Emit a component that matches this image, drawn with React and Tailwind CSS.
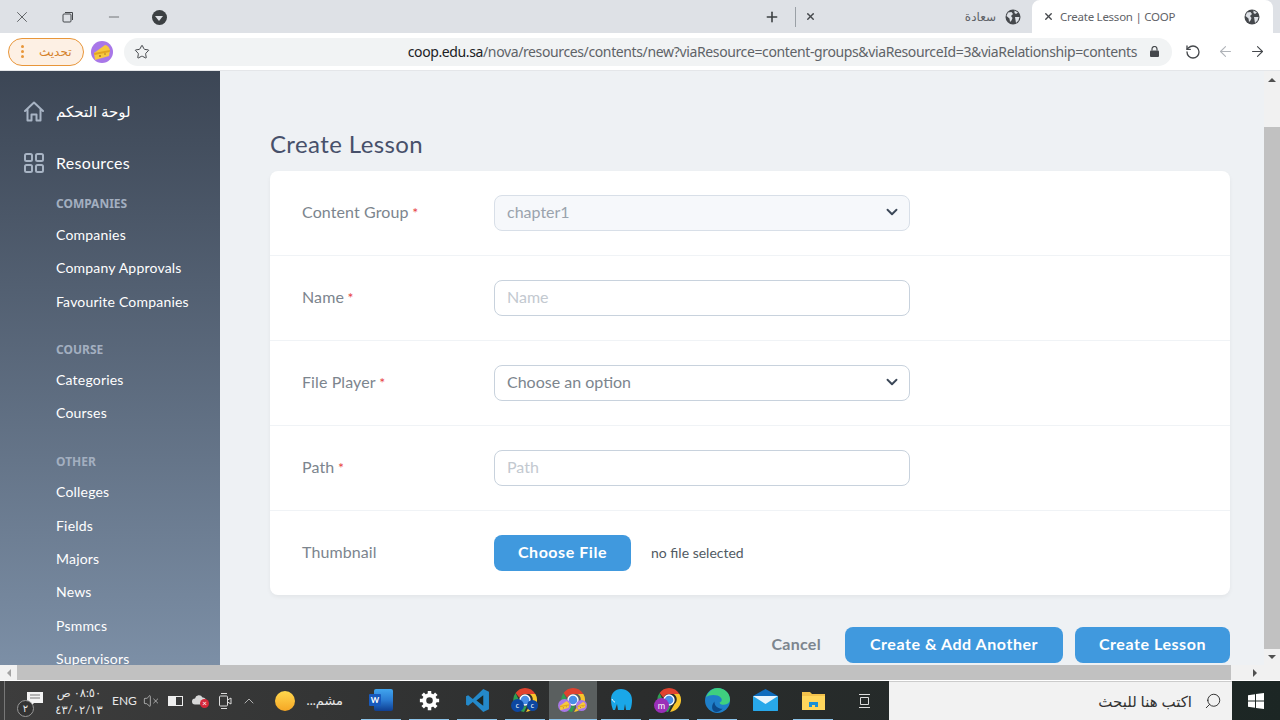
import React from "react";
import { ChevronDown, Star, RotateCw, ArrowLeft, ArrowRight, Plus, X, Minus, Search, VolumeX, ChevronUp } from "lucide-react";

const FONT = "font-['Lato','Noto_Sans','DejaVu_Sans',sans-serif]";

const Globe = ({ className = "" }) => (
  <svg viewBox="0 0 16 16" className={className}>
    <circle cx="8" cy="8" r="7.5" fill="#45484c" />
    <path d="M3 3.5 6.5 3 8 5 6 7 7.5 9 6.5 11.5 5 13 4.5 9.5 1.5 7Z M9.5 1.5 13 3.5 11 5 9.5 4Z M10 8 14.5 8 13.5 11.5 11 14 10.5 11Z" fill="#dee1e6" />
  </svg>
);

const Cheese = ({ s = 22 }) => (
  <svg viewBox="0 0 22 22" width={s} height={s}>
    <circle cx="11" cy="11" r="11" fill="#a877e8" />
    <path d="M3 12 14 4c2.500 .5 4 2 5 5l-1 6-14 4Z" fill="#f7c93e" />
    <path d="M3 12 19 9l-.4 2L3.500 14Z" fill="#e2a520" />
    <circle cx="9" cy="15" r="1" fill="#a8741a" />
    <circle cx="14" cy="13" r=".8" fill="#a8741a" />
  </svg>
);

const ChromeLogo = ({ children }) => (
  <div className="relative w-[24px] h-[24px]">
    <svg viewBox="0 0 24 24" width="24" height="24">
      <path d="M12 0a12 12 0 0 1 10.4 6H12a6 6 0 0 0-5.6 3.8L2.6 5A12 12 0 0 1 12 0Z" fill="#e0432f" />
      <path d="M22.4 6A12 12 0 0 1 13 24l4.5-8a6 6 0 0 0-1-10Z" fill="#f8c52c" />
      <path d="M2.6 5 7.500 15.500a6 6 0 0 0 6.500 2.500L11 24A12 12 0 0 1 2.600 5Z" fill="#2f9e52" />
      <circle cx="12" cy="12" r="5" fill="#4a8fe8" stroke="#fff" strokeWidth="1.400" />
    </svg>
    {children}
  </div>
);

const Badge = ({ bg, children, className = "" }) => (
  <span className={`absolute flex items-center justify-center rounded-full text-white text-[7px] leading-none ${bg} ${className}`}>{children}</span>
);

const NavLink = ({ children }) => (
  <div className="h-[33.33px] flex items-center pl-[56px] text-[14px] tracking-[0.2px] text-white whitespace-nowrap">{children}</div>
);

const NavHead = ({ children, className = "" }) => (
  <div className={`h-[16px] flex items-center pl-[56px] text-[12px] font-bold font-['Noto_Sans'] text-[#a3afc0] ${className}`}>{children}</div>
);

const Row = ({ label, req, children, last }) => (
  <div className={`flex items-center px-[32px] ${last ? "h-[84px]" : "h-[85px] border-b border-[#f0f3f6]"}`}>
    <div className="w-[192px] pb-[2px] text-[16px] tracking-[0.1px] text-[#7c858e]">
      {label}
      {req && <span className="text-[#e74444] text-[14px]"> *</span>}
    </div>
    {children}
  </div>
);

const TaskItem = ({ children, active, run = true }) => (
  <div className={`w-[48px] h-full flex flex-col items-center ${active ? "bg-[#5a5f5f]" : ""}`}>
    <div className="flex-1 flex items-center justify-center">{children}</div>
    <div className={`h-[2px] w-full ${run ? (active ? "bg-[#8cc4ea]" : "px-[4px]") : ""}`}>
      {run && !active && <div className="h-full bg-[#8cc4ea]" />}
    </div>
  </div>
);

const btn = "h-[36px] pb-[2px] rounded-[8px] bg-[#4099de] flex items-center justify-center text-white font-bold text-[16px] tracking-[0.55px]";

export default function App() {
  return (
    <div className={`w-[1280px] h-[720px] overflow-hidden flex flex-col bg-white ${FONT}`}>
      {/* tab strip */}
      <div className="h-[33px] shrink-0 bg-[#dee1e6] flex items-center">
        <div className="w-[44px] flex justify-center"><X size={18} strokeWidth={1} className="text-[#3a3c3f]" /></div>
        <div className="w-[48px] flex justify-center">
          <svg width="12" height="12" viewBox="0 0 12 12" fill="none" stroke="#45484c" strokeWidth="1"><path d="M3 1.500h7.500V9" /><rect x="1" y="3" width="8" height="8" rx="1" fill="#dee1e6" /></svg>
        </div>
        <div className="w-[44px] flex justify-center"><Minus size={16} strokeWidth={1} className="text-[#3a3c3f]" /></div>
        <div className="w-[46px] flex justify-center mt-[1px]">
          <span className="w-[15px] h-[15px] rounded-full bg-[#3c4043] flex items-center justify-center">
            <span className="w-0 h-0 border-x-[4px] border-x-transparent border-t-[5px] border-t-[#dee1e6] mt-[2px]" />
          </span>
        </div>
        <div className="flex-1" />
        <Plus size={16} strokeWidth={2.400} className="text-[#3c4043] mr-[15px]" />
        <div className="w-px h-[20px] bg-[#9aa0a6] mr-[9px]" />
        <X size={11} strokeWidth={3} className="text-[#45484c]" />
        <div className="w-[149px]" />
        <span className="text-[12px] text-[#5f6368]" dir="rtl">سعادة</span>
        <Globe className="w-[16px] h-[16px] ml-[9px]" />
        <div className="w-[11px]" />
        <div className="w-[241px] h-[33px] self-end bg-white rounded-t-[8px] flex items-center pl-[11px]">
          <X size={11} strokeWidth={3} className="text-[#45484c]" />
          <span className="ml-[6px] text-[11.5px] tracking-[-0.25px] text-[#5f6368] whitespace-nowrap font-['Noto_Sans']">Create Lesson | COOP</span>
          <div className="flex-1" />
          <Globe className="w-[16px] h-[16px] mr-[13px]" />
        </div>
        <div className="w-[7px]" />
      </div>

      {/* toolbar */}
      <div className="h-[37px] shrink-0 bg-white flex items-center pl-[8px] border-b border-[#e4e6e9] box-content">
        <div className="w-[76px] h-[28px] rounded-full border border-[#e8963a] bg-[#fdf0e4] flex items-center pl-[12px]">
          <span className="flex flex-col gap-[2px]">
            <i className="w-[3px] h-[3px] rounded-full bg-[#e8963a]" />
            <i className="w-[3px] h-[3px] rounded-full bg-[#e8963a]" />
            <i className="w-[3px] h-[3px] rounded-full bg-[#e8963a]" />
          </span>
          <span className="ml-[15px] text-[12px] text-[#d5812a] leading-none" dir="rtl">تحديث</span>
        </div>
        <div className="ml-[7px]"><Cheese /></div>
        <div className="ml-[11px] w-[1048px] h-[28px] rounded-full bg-[#f1f3f4] flex items-center pl-[10px]">
          <Star size={16} strokeWidth={1.500} className="text-[#45484c]" />
          <div className="flex-1 text-right text-[14px] whitespace-nowrap font-['Noto_Sans'] tracking-[-0.38px] text-[#5f6368]">
            <span className="text-[#202124]">coop.edu.sa</span>/nova/resources/contents/new?viaResource=content-groups&amp;viaResourceId=3&amp;viaRelationship=contents
          </div>
          <svg width="9" height="11" viewBox="0 0 9 11" className="ml-[13px] mr-[13px]"><path d="M2 4.500V3a2.500 2.500 0 0 1 5 0v1.500" fill="none" stroke="#45484c" strokeWidth="1.200" /><rect y="4.500" width="9" height="6.500" rx="1" fill="#45484c" /></svg>
        </div>
        <RotateCw size={16} strokeWidth={2} className="text-[#45484c] ml-[13px] -scale-x-100" />
        <ArrowLeft size={17} strokeWidth={1.500} className="text-[#b0b4b9] ml-[16px]" />
        <ArrowRight size={17} strokeWidth={1.500} className="text-[#45484c] ml-[15px]" />
      </div>

      {/* page */}
      <div className="h-[594px] shrink-0 flex overflow-hidden">
        <aside className="w-[220px] shrink-0 overflow-hidden bg-gradient-to-b from-[#3c4655] to-[#7c8fa6]">
          <div className="flex items-center h-[24px] mt-[28px] pl-[24px] text-white text-[15px]">
            <svg width="20" height="21" viewBox="0 0 20 21" fill="none" stroke="#a8b4c4" strokeWidth="2" strokeLinejoin="round" strokeLinecap="round"><path d="M1 10 10 1.500 19 10M3.500 8v11.500h4V13.500h5v6h4V8" /></svg>
            <span className="ml-[12px]" dir="rtl">لوحة التحكم</span>
          </div>
          <div className="flex items-center h-[24px] mt-[28px] pl-[24px] text-white text-[16px] tracking-[0.3px]">
            <svg width="20" height="20" viewBox="0 0 20 20" fill="none" stroke="#a8b4c4" strokeWidth="2"><rect x="1" y="1" width="7" height="7" rx="1.500" /><rect x="12" y="1" width="7" height="7" rx="1.500" /><rect x="1" y="12" width="7" height="7" rx="1.500" /><rect x="12" y="12" width="7" height="7" rx="1.500" /></svg>
            <span className="ml-[12px]">Resources</span>
          </div>
          <NavHead className="mt-[21px] mb-[6px]">COMPANIES</NavHead>
          <NavLink>Companies</NavLink>
          <NavLink>Company Approvals</NavLink>
          <NavLink>Favourite Companies</NavLink>
          <NavHead className="mt-[24px] mb-[5px]">COURSE</NavHead>
          <NavLink>Categories</NavLink>
          <NavLink>Courses</NavLink>
          <NavHead className="mt-[24px] mb-[5.500px]">OTHER</NavHead>
          <NavLink>Colleges</NavLink>
          <NavLink>Fields</NavLink>
          <NavLink>Majors</NavLink>
          <NavLink>News</NavLink>
          <NavLink>Psmmcs</NavLink>
          <NavLink>Supervisors</NavLink>
        </aside>

        <main className="flex-1 bg-[#eef1f4] pl-[50px] pr-[34px] pt-[57px] overflow-hidden">
          <h1 className="h-[32px] mb-[11px] text-[24px] leading-[32px] tracking-[0.4px] text-[#47506a]">Create Lesson</h1>
          <div className="bg-white rounded-[8px] shadow-[0_2px_4px_rgba(0,0,0,0.05)]">
            <Row label="Content Group" req>
              <div className="w-[416px] h-[36px] pb-[2px] rounded-[8px] border border-[#d8dfe8] bg-[#f6f8fb] flex items-center justify-between pl-[12px] pr-[8px] text-[16px] text-[#9aa3ad]">
                chapter1 <ChevronDown size={18} strokeWidth={2.500} className="text-[#3c4858]" />
              </div>
            </Row>
            <Row label="Name" req>
              <div className="w-[416px] h-[36px] pb-[2px] rounded-[8px] border border-[#c8d2dd] flex items-center pl-[12px] text-[16px] text-[#c3c9d0]">Name</div>
            </Row>
            <Row label="File Player" req>
              <div className="w-[416px] h-[36px] pb-[2px] rounded-[8px] border border-[#c8d2dd] flex items-center justify-between pl-[12px] pr-[8px] text-[16px] text-[#7c858e]">
                Choose an option <ChevronDown size={18} strokeWidth={2.500} className="text-[#3c4858]" />
              </div>
            </Row>
            <Row label="Path" req>
              <div className="w-[416px] h-[36px] pb-[2px] rounded-[8px] border border-[#c8d2dd] flex items-center pl-[12px] text-[16px] text-[#c3c9d0]">Path</div>
            </Row>
            <Row label="Thumbnail" last>
              <div className={`w-[137px] ${btn}`}>Choose File</div>
              <span className="ml-[20px] pb-[2px] text-[14px] text-[#515a63]">no file selected</span>
            </Row>
          </div>
          <div className="flex items-center justify-end mt-[32px]">
            <span className="text-[16px] pb-[2px] font-bold text-[#7c858e] tracking-[0.3px] mr-[24px]">Cancel</span>
            <div className={`w-[218px] mr-[12px] ${btn}`}>Create &amp; Add Another</div>
            <div className={`w-[155px] ${btn}`}>Create Lesson</div>
          </div>
        </main>

        <div className="w-[16px] shrink-0 bg-[#f1f1f1] flex flex-col items-center">
          <div className="h-[16px] shrink-0 flex items-center justify-center mt-[1px]">
            <span className="w-0 h-0 border-x-[4px] border-x-transparent border-b-[4px] border-b-[#505050]" />
          </div>
          <div className="w-full h-[39px] shrink-0" />
          <div className="w-full flex-1 bg-[#c1c1c1]" />
          <div className="h-[16px] shrink-0 flex items-center justify-center">
            <span className="w-0 h-0 border-x-[4px] border-x-transparent border-t-[4px] border-t-[#505050]" />
          </div>
        </div>
      </div>

      {/* horizontal scrollbar */}
      <div className="h-[15px] shrink-0 bg-[#f1f1f1] flex items-center">
        <div className="w-[17px] flex justify-center"><span className="w-0 h-0 border-y-[4px] border-y-transparent border-r-[4px] border-r-[#a3a3a3]" /></div>
        <div className="w-[1214px] h-full bg-[#c1c1c1]" />
        <div className="w-[22px]" />
        <span className="w-0 h-0 border-y-[4px] border-y-transparent border-l-[4px] border-l-[#505050]" />
      </div>

      {/* taskbar */}
      <div className="h-[41px] shrink-0 border-t border-white bg-gradient-to-r from-[#3d3d3d] via-[#2b2d2d] to-[#1c2624] flex items-center text-[#e8e8e8]">
        <div className="w-[5px] h-full border-r border-[#777]" />
        <div className="w-[50px] h-full relative flex items-center justify-center shrink-0">
          <svg width="18" height="17" viewBox="0 0 18 17" className="ml-[9px] -mt-[3px]"><path d="M1 1h16v11H8l-3 3v-3H1Z" fill="#f4f4f4" /><path d="M4 4h10M4 7h10" stroke="#777" /></svg>
          <span className="absolute left-[12px] top-[19px] w-[17px] h-[17px] rounded-full border border-[#999] bg-[#333] text-[10px] leading-[15px] text-center">٢</span>
        </div>
        <div className="w-[50px] shrink-0 flex flex-col items-center text-[11.5px] leading-[17px] -ml-[1px]">
          <span dir="rtl">٠٨:٥٠ ص</span>
          <span>٤٣/٠٢/١٣</span>
        </div>
        <span className="ml-[8px] w-[24px] text-[12px]">ENG</span>
        <VolumeX size={16} strokeWidth={1} className="ml-[7px] text-[#e0e0e0]" />
        <svg width="16" height="10" viewBox="0 0 16 10" className="ml-[9px]"><rect x=".5" y=".5" width="14" height="9" fill="none" stroke="#eee" /><rect x="1" y="1" width="7" height="8" fill="#eee" /></svg>
        <div className="relative w-[16px] h-[14px] ml-[8px]">
          <svg width="14" height="10" viewBox="0 0 14 10" className="absolute top-[1px]"><path d="M3 9.500a3 3 0 0 1 0-6 4 4 0 0 1 7.500-1 3.500 3.500 0 0 1 0 7Z" fill="#d8d8d8" /></svg>
          <span className="absolute left-[8px] top-[5px] w-[9px] h-[9px] rounded-full bg-[#d6283a] text-white text-[8px] leading-[9px] text-center">×</span>
        </div>
        <svg width="14" height="18" viewBox="0 0 14 18" fill="none" stroke="#ddd" className="ml-[10px]"><rect x="1.500" y="4" width="8" height="10" rx="1" /><path d="M9.500 8 13 6v6l-3.500-2M3 1.500h6M3 16.500h6" /></svg>
        <ChevronUp size={16} strokeWidth={1} className="ml-[9px] text-[#eee]" />
        <div className="ml-[18px] w-[20px] h-[20px] rounded-full bg-gradient-to-b from-[#ffd84d] to-[#f5a623]" />
        <span className="ml-[8px] text-[13px] w-[40px]" dir="rtl">مشم...</span>

        <div className="flex h-full ml-[14px]">
          <TaskItem>
            <div className="relative w-[24px] h-[22px]">
              <div className="absolute right-0 top-0 w-[19px] h-[22px] rounded-[2px] bg-gradient-to-b from-[#41a5ee] via-[#2b7cd3] to-[#103f91]" />
              <div className="absolute left-0 top-[5px] w-[12px] h-[12px] bg-[#185abd] rounded-[1px] text-white text-[8px] font-bold text-center leading-[12px]">W</div>
            </div>
          </TaskItem>
          <TaskItem>
            <svg width="21" height="21" viewBox="0 0 24 24" fill="none" stroke="#fff"><circle cx="12" cy="12" r="6" strokeWidth="4.500" /><path d="M12 1v4M12 19v4M1 12h4M19 12h4M4.200 4.200 7 7M17 17l2.800 2.800M4.200 19.800 7 17M17 7l2.800-2.800" strokeWidth="4" /></svg>
          </TaskItem>
          <TaskItem>
            <svg width="25" height="25" viewBox="0 0 24 24"><path d="M17.500 1 23 3.500v17L17.500 23 7.500 13.500 3 17 1 16V8l2-1 4.500 3.500Z" fill="#2489ca" /><path d="M17.500 7 11 12l6.500 5Z" fill="#1c2624" /></svg>
          </TaskItem>
          <TaskItem>
            <ChromeLogo>
              <Badge bg="bg-[#0d47a1]" className="w-[13px] h-[13px] -left-[2px] bottom-0">c</Badge>
              <Badge bg="bg-[#0d47a1]" className="w-[11px] h-[11px] -right-[1px] bottom-[1px]">c</Badge>
            </ChromeLogo>
          </TaskItem>
          <TaskItem active>
            <ChromeLogo>
              <div className="absolute -left-[3px] bottom-0"><Cheese s={13} /></div>
              <div className="absolute -right-[2px] bottom-[1px]"><Cheese s={11} /></div>
            </ChromeLogo>
          </TaskItem>
          <TaskItem>
            <svg width="24" height="24" viewBox="0 0 24 24"><path d="M2 12C2 5 6 1 12 1s11 4 11 11c0 5-1 9-2 10h-4l-1-6-1 6H9l-1-6-2 6H4c-1-3-2-6-2-10Z" fill="#1aa7e8" /><path d="M3 11c1 2 2 3 3 3" stroke="#fff" fill="none" /></svg>
          </TaskItem>
          <TaskItem>
            <ChromeLogo>
              <Badge bg="bg-[#9a2fb8]" className="w-[15px] h-[15px] -left-[3px] bottom-[-1px] text-[9px]">m</Badge>
            </ChromeLogo>
          </TaskItem>
          <TaskItem>
            <svg width="25" height="25" viewBox="0 0 24 24"><circle cx="12" cy="12" r="12" fill="#1f7fc9" /><path d="M1 9C3 3 8 0 12 0c7 0 12 5 12 11 0 4-4 5-7 5-2 0-3-1-3-2 2-1 3-3 1-5-3-3-11-3-14 0Z" fill="#3fd07f" /><path d="M9 13c0 4 3 7 8 7-2 2-4 3-6 3-4 0-6-5-2-10Z" fill="#0c4a8a" /></svg>
          </TaskItem>
          <TaskItem run={false}>
            <svg width="25" height="22" viewBox="0 0 25 22"><path d="M12.500 0 25 7v15H0V7Z" fill="#0f6cbd" /><rect y="7" width="25" height="15" rx="1" fill="#28a8ea" /><path d="M0 7l12.500 8L25 7" fill="#e8f4fc" /></svg>
          </TaskItem>
          <TaskItem>
            <svg width="23" height="20" viewBox="0 0 23 20"><path d="M0 2h8l2 2h13v16H0Z" fill="#f2c14b" /><rect y="6" width="23" height="14" fill="#ffd65c" /><path d="M7 12h9v5h-3v-2h-3v2H7Z" fill="#1a8fd6" /></svg>
          </TaskItem>
        </div>
        <div className="w-[52px] flex justify-center shrink-0">
          <svg width="16" height="16" viewBox="0 0 16 16" fill="none" stroke="#ddd"><path d="M4 1.500h11M4 14.500h11M5.500 4.500h8v7h-8Z" /><path d="M1 3v.1M1 8v.1M1 13v.1" strokeWidth="1.500" /></svg>
        </div>
        <div className="w-[343px] h-full shrink-0 bg-[#f2f2f2] border-y border-[#ccc] flex items-center justify-end pr-[10px] text-[15px] text-[#333]">
          <span dir="rtl">اكتب هنا للبحث</span>
          <Search size={18} strokeWidth={1.200} className="ml-[12px] text-[#222] -scale-x-100" />
        </div>
        <div className="flex-1 flex justify-center">
          <svg width="16" height="16" viewBox="0 0 16 16" fill="#fff"><path d="M0 2.200 7 1.200V7.600H0ZM8 1 16 0V7.600H8ZM0 8.400H7V14.800L0 13.800ZM8 8.400H16V16L8 15Z" /></svg>
        </div>
      </div>
    </div>
  );
}
